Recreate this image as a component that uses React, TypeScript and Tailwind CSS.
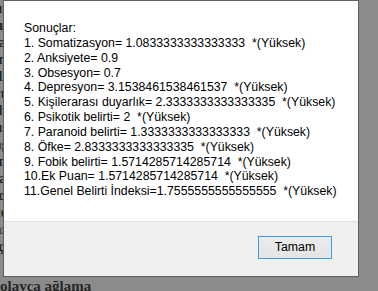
import React from "react";

const lines = [
  "Sonuçlar:",
  "1. Somatizasyon= 1.0833333333333333  *(Yüksek)",
  "2. Anksiyete= 0.9",
  "3. Obsesyon= 0.7",
  "4. Depresyon= 3.1538461538461537  *(Yüksek)",
  "5. Kişilerarası duyarlık= 2.3333333333333335  *(Yüksek)",
  "6. Psikotik belirti= 2  *(Yüksek)",
  "7. Paranoid belirti= 1.3333333333333333  *(Yüksek)",
  "8. Öfke= 2.8333333333333335  *(Yüksek)",
  "9. Fobik belirti= 1.5714285714285714  *(Yüksek)",
  "10.Ek Puan= 1.5714285714285714  *(Yüksek)",
  "11.Genel Belirti İndeksi=1.7555555555555555  *(Yüksek)",
];

const bgLines = [
  "ui", "tık", "lar", "im", "dir", "cu", "duy", "uş",
  "ağr", "ım", "taş", "iol", "cey", "ara", "iç",
];

export default function App() {
  return (
    <div className="relative w-[378px] h-[291px] overflow-hidden bg-[#8b8b8b]">
      {/* page behind the dialog */}
      <div
        className="flex flex-col text-[15px] leading-[17px] font-bold text-[#262626] ml-[-6px]"
        style={{ fontFamily: '"Liberation Serif", serif' }}
      >
        {bgLines.map((t, i) => (
          <div key={i} className="whitespace-nowrap">{t}</div>
        ))}
        <div className="whitespace-nowrap ml-[6px] mt-[23px]">olayca ağlama</div>
      </div>

      {/* dialog */}
      <div
        className="absolute left-[3px] top-0 w-[356px] h-[277px] flex flex-col border border-[#5f5f5f] bg-white"
        style={{ fontFamily: '"Liberation Sans", Arial, sans-serif' }}
      >
        <div className="flex-1 bg-white pt-[20px] pl-[20px] text-[12.3px] leading-[14.85px] text-black">
          {lines.map((t, i) => (
            <div key={i} className="whitespace-pre">{t}</div>
          ))}
        </div>
        <div className="h-[55px] bg-[#f0f0f0] border-t border-[#dfdfdf] flex justify-end items-start pt-[14px] pr-[26px]">
          <button className="w-[74px] h-[23px] border border-[#3c9bf0] bg-[linear-gradient(#ececec,#e4e4e4)] text-[12.3px] text-black flex items-center justify-center">
            Tamam
          </button>
        </div>
      </div>
    </div>
  );
}
